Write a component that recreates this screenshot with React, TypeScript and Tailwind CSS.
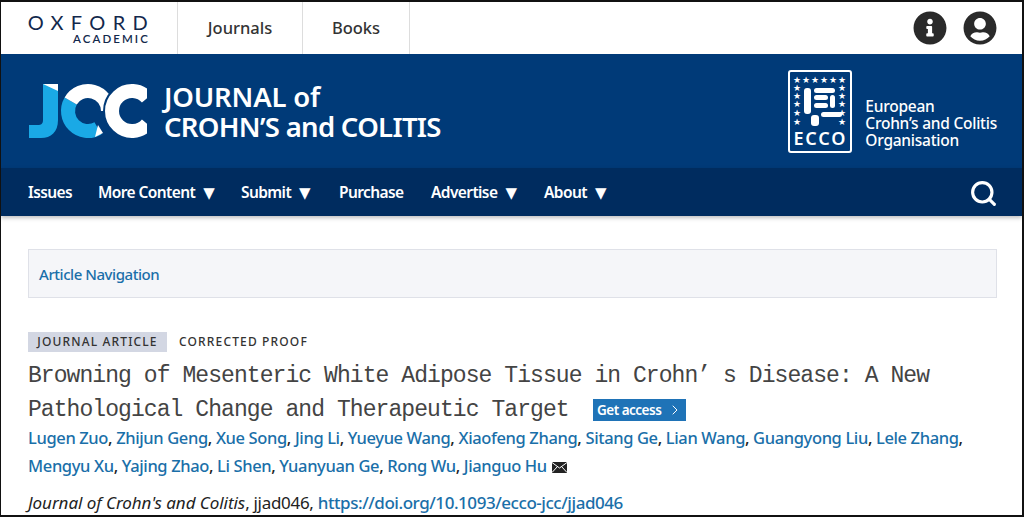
import { FaInfoCircle, FaUserCircle } from "react-icons/fa";
import { ChevronRight, Search } from "lucide-react";

const sans = "font-['Noto_Sans','Liberation_Sans',sans-serif]";

const navItems = [
  { label: "Issues", menu: false, w: "w-[70px]" },
  { label: "More Content", menu: true, w: "w-[143px]" },
  { label: "Submit", menu: true, w: "w-[98px]" },
  { label: "Purchase", menu: false, w: "w-[92px]" },
  { label: "Advertise", menu: true, w: "w-[113px]" },
  { label: "About", menu: true, w: "w-[70px]" },
];

const authorsOne = ["Lugen Zuo", "Zhijun Geng", "Xue Song", "Jing Li", "Yueyue Wang", "Xiaofeng Zhang", "Sitang Ge", "Lian Wang", "Guangyong Liu", "Lele Zhang"];
const authorsTwo = ["Mengyu Xu", "Yajing Zhao", "Li Shen", "Yuanyuan Ge", "Rong Wu", "Jianguo Hu"];

function JccLogo() {
  return (
    <svg width="120" height="56" viewBox="0 0 120 56" className="shrink-0">
      <defs>
        <clipPath id="c2clip">
          <rect x="70" y="0" width="49" height="56" />
        </clipPath>
      </defs>
      {/* J */}
      <path d="M15 1h15v36c0 12-7 18-17 18H1V42h9c3 0 5-1 5-5z" fill="#1aa9e6" />
      <path d="M15 1h15v7z" fill="#fff" />
      {/* first C: white top, blue bottom */}
      <path d="M42.680 18A20 20 0 0 0 70 45.320" fill="none" stroke="#1aa9e6" strokeWidth="14" />
      <path d="M42.680 18A20 20 0 0 1 80 28" fill="none" stroke="#fff" strokeWidth="14" />
      <path d="M67 54l8-4-5-8z" fill="#fff" />
      {/* second C, with a navy edge over the first */}
      <path d="M119.300 15.100A20 20 0 1 0 119.300 40.900" fill="none" stroke="#003a78" strokeWidth="18" clipPath="url(#c2clip)" />
      <path d="M119.300 15.100A20 20 0 1 0 119.300 40.900" fill="none" stroke="#fff" strokeWidth="14" clipPath="url(#c2clip)" />
    </svg>
  );
}

function EccoLogo() {
  const top = [7, 16, 25, 34, 43, 52];
  const side = [16, 24, 32, 41, 50];
  const star = { fontSize: 9, fill: "#fff", textAnchor: "middle" as const, fontFamily: "DejaVu Sans" };
  return (
    <div className="flex h-[83px] w-[64px] shrink-0 flex-col items-center rounded-[3px] border-2 border-white">
      <svg width="60" height="57" viewBox="0 0 60 57" className="shrink-0">
        {top.map((x) => (
          <text key={x} x={x} y="11" {...star}>★</text>
        ))}
        {side.map((y) => (
          <g key={y}>
            <text x="7" y={y + 3} {...star}>★</text>
            <text x="52" y={y + 3} {...star}>★</text>
          </g>
        ))}
        <rect x="14" y="16" width="7" height="26" rx="3" fill="#fff" />
        <rect x="24" y="16" width="21" height="5" rx="2.500" fill="#fff" />
        <rect x="24" y="23" width="14" height="5" rx="2.500" fill="#fff" />
        <rect x="24" y="31" width="14" height="5" rx="2.500" fill="#fff" />
        <rect x="40" y="23" width="5" height="13" rx="2.500" fill="#fff" />
        <rect x="21" y="43" width="8" height="11" rx="3" fill="#fff" />
        <rect x="31" y="40" width="21" height="5" rx="2.500" fill="#fff" />
      </svg>
      <span className="font-['Noto_Sans',sans-serif] text-[18px] leading-[18px] font-semibold tracking-[1.8px] text-white">ECCO</span>
    </div>
  );
}

function MailIcon() {
  return (
    <svg width="15" height="11" viewBox="0 0 15 11" className="ml-[5px] inline-block">
      <rect width="15" height="11" fill="#222" />
      <path d="M0 0.500l7.500 5.500 7.500-5.500M0 10.500l5.500-6M15 10.500l-5.500-6" fill="none" stroke="#fff" strokeWidth="1" />
    </svg>
  );
}

function AuthorLine({ names, trailing }: { names: string[]; trailing: boolean }) {
  return (
    <p className="h-[28px] whitespace-nowrap text-[16.5px] leading-[28px] font-medium tracking-[-0.37px] text-[#222]">
      {names.map((n, i) => (
        <span key={n}>
          <a className="text-[#1a6fa9]">{n}</a>
          {i < names.length - 1 || trailing ? ", " : ""}
        </span>
      ))}
      {!trailing && <MailIcon />}
    </p>
  );
}

export default function App() {
  return (
    <div className={`h-[517px] w-[1024px] overflow-hidden border-t-2 border-r-2 border-b-2 border-l-[1px] border-[#111] bg-white ${sans}`}>
      <header className="flex h-[52px] items-stretch bg-white">
        <div className="flex w-[177px] flex-col items-end justify-center border-r border-[#ddd] pr-[29px] pt-[1px]">
          <span className="-mr-[7px] font-['Lato',sans-serif] text-[20px] leading-[21px] tracking-[7.3px] text-[#12284c]">OXFORD</span>
          <span className="-mr-[2px] font-['Lato',sans-serif] text-[11.5px] leading-[12px] font-semibold tracking-[2.1px] text-[#12284c]">ACADEMIC</span>
        </div>
        <div className="flex w-[125px] items-center justify-center border-r border-[#ddd] text-[16.5px] font-medium text-[#333]">Journals</div>
        <div className="flex w-[107px] items-center justify-center border-r border-[#ddd] text-[16.5px] font-medium text-[#333]">Books</div>
        <div className="ml-auto flex items-center gap-[16px] pr-[25px]">
          <FaInfoCircle className="h-[34px] w-[34px] text-[#2a2a2a]" />
          <FaUserCircle className="h-[34px] w-[34px] text-[#2a2a2a]" />
        </div>
      </header>

      <div className="flex h-[114px] items-center bg-[#003a78] pl-[27px] pr-[25px]">
        <JccLogo />
        <div className="ml-[16px] pt-[2px] text-[27.5px] leading-[30px] font-semibold tracking-[-0.7px] text-white">
          <div className="tracking-[-0.2px]">JOURNAL of</div>
          <div>CROHN’S and COLITIS</div>
        </div>
        <div className="ml-auto flex items-end gap-[13px]">
          <EccoLogo />
          <div className="pb-[4px] text-[15.5px] leading-[17px] font-medium tracking-[-0.25px] text-white">
            <div>European</div>
            <div>Crohn’s and Colitis</div>
            <div>Organisation</div>
          </div>
        </div>
      </div>

      <nav className="flex h-[48px] items-center bg-[#002c5f] pl-[27px] pr-[24px] pt-[2px] shadow-[0_2px_4px_rgba(0,0,0,0.25)]">
        {navItems.map((item) => (
          <div key={item.label} className={`flex items-center gap-[8px] whitespace-nowrap text-[15.5px] font-semibold tracking-[-0.6px] text-white ${item.w}`}>
            {item.label}
            {item.menu && <span className="font-['DejaVu_Sans',sans-serif] text-[15px] leading-none">▼</span>}
          </div>
        ))}
        <Search className="ml-auto h-[29px] w-[29px] text-white" strokeWidth={2.6} />
      </nav>

      <main className="pl-[27px] pr-[25px] pt-[33px]">
        <div className="flex h-[49px] items-center border border-[#dfe1e8] bg-[#f5f6f9] pl-[10px] pt-[1px] text-[15px] font-medium tracking-[-0.45px] text-[#1a6fa9]">
          Article Navigation
        </div>

        <div className="mt-[34px] flex h-[20px] items-center text-[12px] font-medium tracking-[1.15px] text-[#333]">
          <span className="flex h-[20px] w-[139px] items-center justify-center bg-[#d3d7e3]">JOURNAL ARTICLE</span>
          <span className="ml-[12px]">CORRECTED PROOF</span>
        </div>

        <h1 className="mt-[7px] font-['Liberation_Mono',monospace] text-[23px] leading-[34px] font-normal tracking-[-0.93px] whitespace-nowrap text-[#444]">
          <div>Browning of Mesenteric White Adipose Tissue in Crohn’ s Disease: A New</div>
          <div className="flex items-center">
            Pathological Change and Therapeutic Target
            <span className={`ml-[24px] flex h-[22px] w-[93px] items-center justify-center gap-[6px] bg-[#1f73b7] pl-[2px] text-[13.5px] font-semibold tracking-[-0.5px] text-white ${sans}`}>
              Get access
              <ChevronRight className="h-[16px] w-[16px]" strokeWidth={1.5} />
            </span>
          </div>
        </h1>

        <div className="-mt-[3px]">
          <AuthorLine names={authorsOne} trailing />
          <AuthorLine names={authorsTwo} trailing={false} />
        </div>

        <p className="mt-[11px] whitespace-nowrap text-[17px] leading-[24px] tracking-[-0.3px] text-[#222]">
          <em className="tracking-[-0.05px]">Journal of Crohn's and Colitis</em>, jjad046, <a className="font-medium tracking-[-0.45px] text-[#1a6fa9]">https://doi.org/10.1093/ecco-jcc/jjad046</a>
        </p>
      </main>
    </div>
  );
}
